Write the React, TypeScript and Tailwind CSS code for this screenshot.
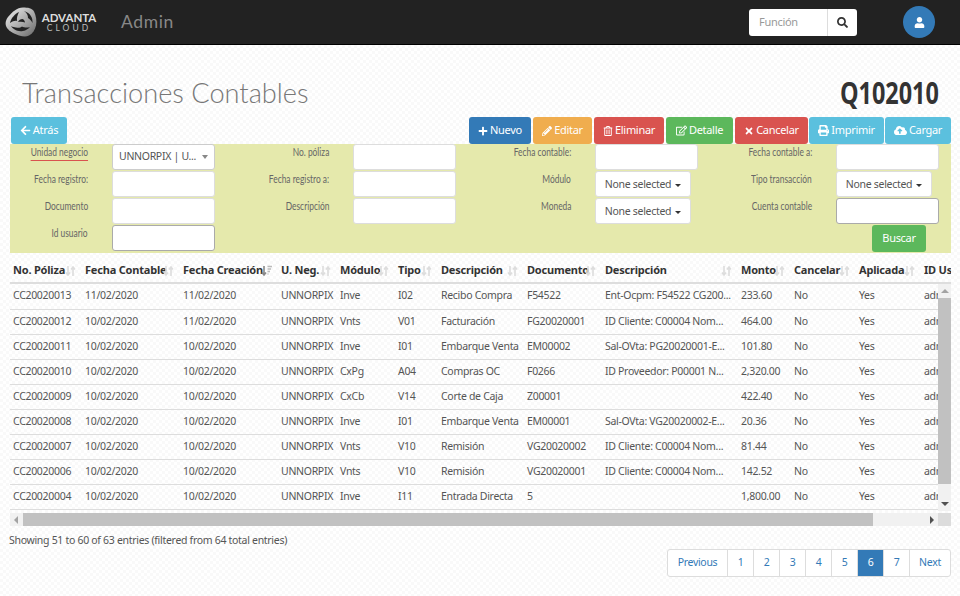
import { FaArrowLeft, FaPlus, FaPencilAlt, FaRegTrashAlt, FaRegEdit, FaTimes, FaPrint, FaCloudUploadAlt, FaSearch, FaUser } from 'react-icons/fa';
import type { ReactNode } from 'react';

const cols = [72, 98, 98, 59, 58, 43, 86, 78, 136, 53, 65, 65, 30];

const headers = ['No. Póliza', 'Fecha Contable', 'Fecha Creación', 'U. Neg.', 'Módulo', 'Tipo', 'Descripción', 'Documento', 'Descripción', 'Monto', 'Cancelar', 'Aplicada', 'ID Usuario'];

const rows = [
  ['CC20020013', '11/02/2020', '11/02/2020', 'UNNORPIX', 'Inve', 'I02', 'Recibo Compra', 'F54522', 'Ent-Ocpm: F54522 CG200...', '233.60'],
  ['CC20020012', '10/02/2020', '11/02/2020', 'UNNORPIX', 'Vnts', 'V01', 'Facturación', 'FG20020001', 'ID Cliente: C00004 Nom...', '464.00'],
  ['CC20020011', '10/02/2020', '10/02/2020', 'UNNORPIX', 'Inve', 'I01', 'Embarque Venta', 'EM00002', 'Sal-OVta: PG20020001-E...', '101.80'],
  ['CC20020010', '10/02/2020', '10/02/2020', 'UNNORPIX', 'CxPg', 'A04', 'Compras OC', 'F0266', 'ID Proveedor: P00001 N...', '2,320.00'],
  ['CC20020009', '10/02/2020', '10/02/2020', 'UNNORPIX', 'CxCb', 'V14', 'Corte de Caja', 'Z00001', '', '422.40'],
  ['CC20020008', '10/02/2020', '10/02/2020', 'UNNORPIX', 'Inve', 'I01', 'Embarque Venta', 'EM00001', 'Sal-OVta: VG20020002-E...', '20.36'],
  ['CC20020007', '10/02/2020', '10/02/2020', 'UNNORPIX', 'Vnts', 'V10', 'Remisión', 'VG20020002', 'ID Cliente: C00004 Nom...', '81.44'],
  ['CC20020006', '10/02/2020', '10/02/2020', 'UNNORPIX', 'Vnts', 'V10', 'Remisión', 'VG20020001', 'ID Cliente: C00004 Nom...', '142.52'],
  ['CC20020004', '10/02/2020', '10/02/2020', 'UNNORPIX', 'Inve', 'I11', 'Entrada Directa', '5', '', '1,800.00'],
];

function Btn({ color, icon, children, className = '' }: { color: string; icon: ReactNode; children: ReactNode; className?: string }) {
  return (
    <button className={`flex h-[27px] items-center justify-center gap-[2px] rounded-[3px] text-[11px] text-white ${color} ${className}`}>
      {icon}
      {children}
    </button>
  );
}

function Label({ children, underline }: { children: ReactNode; underline?: boolean }) {
  return (
    <div className="flex w-[78px] items-start justify-end">
      <span className={`origin-right scale-x-[0.7] whitespace-nowrap font-['Lato',sans-serif] text-[12px] leading-[16px] tracking-normal text-[#666] ${underline ? 'border-b border-[#d9534f]' : ''}`}>
        {children}
      </span>
    </div>
  );
}

function TextBox({ strong }: { strong?: boolean }) {
  return <div className={`h-[26px] w-[103px] rounded-[3px] border bg-white ${strong ? 'border-[#aaa]' : 'border-[#ddd]'}`} />;
}

function NoneSelected() {
  return (
    <div className="flex h-[26px] w-[96px] items-center justify-center gap-[4px] rounded-[3px] border border-[#ddd] bg-white pt-[2px] text-[#555]">
      None selected
      <span className="mt-[1px] h-0 w-0 border-x-[3.5px] border-t-[3.5px] border-x-transparent border-t-[#333]" />
    </div>
  );
}

function Field({ label, underline, children }: { label: string; underline?: boolean; children: ReactNode }) {
  return (
    <div className="flex h-[27px] gap-[24px]">
      <Label underline={underline}>{label}</Label>
      {children}
    </div>
  );
}

function SortIcon({ active }: { active?: boolean }) {
  return (
    <svg width="11" height="12" viewBox="0 0 11 12" className="absolute right-[6px] top-[7px]">
      <path d="M3 1v9M1 7.5 3 10l2-2.5" fill="none" stroke={active ? '#888' : '#ddd'} strokeWidth="1.6" />
      {active ? (
        <path d="M6.5 1.5h4.5M6.5 4h3.5M6.5 6.5h2.5M6.5 9h1" fill="none" stroke="#bbb" strokeWidth="1.4" />
      ) : (
        <path d="M8 11V2M6 4.5 8 2l2 2.5" fill="none" stroke="#ddd" strokeWidth="1.6" />
      )}
    </svg>
  );
}

function Logo() {
  return (
    <svg width="32" height="30" viewBox="0 0 32 30">
      <defs>
        <linearGradient id="logoGrad" x1="0" y1="0" x2="1" y2="1">
          <stop offset="0" stopColor="#f2f2f2" />
          <stop offset="0.55" stopColor="#a8a8a8" />
          <stop offset="1" stopColor="#666" />
        </linearGradient>
      </defs>
      <path d="M18 .5c5 0 9 .6 11 4 2 4 3 9 2 14-1 4-3 8-7 10-3 1.500-6 1-10 0C9 27 4 24 2 21 0 18 0 14 3 10 7 5 12 .5 18 .5Z" fill="url(#logoGrad)" />
      <path d="M14 5C10 7 6 11 5 16c3-2 5-2.500 7-2-.5-3 .5-6 2-9Z" fill="#222" />
      <path d="M19 4c3 2 4 4 4 7 2 1 3.500 3 4.500 5 .5-5-2-10-8.500-12Z" fill="#222" />
      <path d="M6 19c2 3 6 6 12 5 3-.5 5-2 7-4-3 1-6 .5-8-.5-1.500 1.500-4 1.500-6 1-2-.2-3-.5-5-1.500Z" fill="#222" />
      <path d="M13 15c1-2 2.500-3 4.500-3 1.500.5 2.500 2 2.500 3.500-2-.8-4.500-.8-7-.5Z" fill="#222" />
    </svg>
  );
}

function Page({ children, active, className = 'w-[26px]' }: { children: ReactNode; active?: boolean; className?: string }) {
  return (
    <div className={`flex h-[26px] items-center justify-center border-l border-[#ddd] first:border-l-0 ${active ? 'bg-[#337ab7] text-white' : 'text-[#337ab7]'} ${className}`}>
      {children}
    </div>
  );
}

export default function App() {
  return (
    <div className="h-[596px] w-[960px] overflow-hidden bg-[repeating-conic-gradient(#f9f9f9_0%_25%,#ffffff_0%_50%)] bg-[length:6px_6px] font-['Noto_Sans',sans-serif] text-[10.5px] tracking-[-0.3px] text-[#555]">
      {/* Top bar */}
      <header className="flex h-[45px] items-center border-b border-black bg-[#222] pl-[5px]">
        <Logo />
        <div className="ml-[5px] flex w-[54px] flex-col items-center font-['Lato',sans-serif] leading-none tracking-normal text-[#ddd]">
          <span className="text-[11.5px] font-bold">ADVANTA</span>
          <span className="text-[8.5px] tracking-[3px] text-[#bbb]">CLOUD</span>
        </div>
        <span className="ml-[25px] font-['Lato',sans-serif] text-[17.5px] tracking-[0.6px] text-[#888]">Admin</span>
        <div className="ml-auto mr-[46px] flex h-[27px] w-[108px] rounded-[3px] bg-white">
          <span className="flex flex-1 items-center pl-[10px] text-[11px] text-[#999]">Función</span>
          <span className="flex w-[30px] items-center justify-center border-l border-[#ddd] text-[#333]">
            <FaSearch size={11} />
          </span>
        </div>
        <div className="mr-[25px] flex h-[32px] w-[32px] items-center justify-center rounded-full bg-[#337ab7] text-white">
          <FaUser size={11} />
        </div>
      </header>

      {/* Title */}
      <div className="flex h-[72px] items-end justify-between pb-[5px] pl-[22px] pr-[21px]">
        <h1 className="font-['Lato',sans-serif] text-[27.2px] font-light leading-[38px] tracking-normal text-[#777]">Transacciones Contables</h1>
        <span className="origin-right scale-x-[0.78] font-['Open_Sans',sans-serif] text-[30px] font-bold leading-[38px] tracking-normal text-[#333]">Q102010</span>
      </div>

      {/* Toolbar */}
      <div className="flex pl-[11px] pr-[9px]">
        <Btn color="bg-[#5bc0de]" icon={<FaArrowLeft size={11} />} className="w-[56px]">Atrás</Btn>
        <div className="ml-auto flex gap-[2px]">
          <Btn color="bg-[#337ab7]" icon={<FaPlus size={10} />} className="w-[62px]">Nuevo</Btn>
          <Btn color="bg-[#f0ad4e]" icon={<FaPencilAlt size={10} />} className="w-[59px]">Editar</Btn>
          <Btn color="bg-[#d9534f]" icon={<FaRegTrashAlt size={10} />} className="w-[70px]">Eliminar</Btn>
          <Btn color="bg-[#5cb85c]" icon={<FaRegEdit size={11} />} className="w-[67px]">Detalle</Btn>
          <Btn color="bg-[#d9534f]" icon={<FaTimes size={10} />} className="mr-[-1px] w-[73px]">Cancelar</Btn>
          <Btn color="bg-[#5bc0de]" icon={<FaPrint size={11} />} className="mr-[-1px] w-[75px]">Imprimir</Btn>
          <Btn color="bg-[#5bc0de]" icon={<FaCloudUploadAlt size={13} />} className="w-[66px]">Cargar</Btn>
        </div>
      </div>

      {/* Filters */}
      <div className="ml-[10px] mr-[9px] grid h-[109px] grid-cols-[241px_242px_241px_auto] bg-[#e5e9ac]">
        <div>
          <Field label="Unidad negocio" underline>
            <div className="flex h-[26px] w-[103px] items-center justify-between whitespace-nowrap rounded-[3px] border border-[#ccc] bg-white px-[6px] text-[#555]">
              UNNORPIX | U...
              <span className="h-0 w-0 border-x-[3.5px] border-t-[4px] border-x-transparent border-t-[#888]" />
            </div>
          </Field>
          <Field label="Fecha registro:"><TextBox /></Field>
          <Field label="Documento"><TextBox /></Field>
          <Field label="Id usuario"><TextBox strong /></Field>
        </div>
        <div>
          <Field label="No. póliza"><TextBox /></Field>
          <Field label="Fecha registro a:"><TextBox /></Field>
          <Field label="Descripción"><TextBox /></Field>
        </div>
        <div>
          <Field label="Fecha contable:"><TextBox /></Field>
          <Field label="Módulo"><NoneSelected /></Field>
          <Field label="Moneda"><NoneSelected /></Field>
        </div>
        <div>
          <Field label="Fecha contable a:"><TextBox /></Field>
          <Field label="Tipo transacción"><NoneSelected /></Field>
          <Field label="Cuenta contable"><TextBox strong /></Field>
          <div className="flex justify-end pr-[25px]">
            <button className="h-[27px] w-[54px] rounded-[3px] bg-[#5cb85c] text-[11px] text-white">Buscar</button>
          </div>
        </div>
      </div>

      {/* Table */}
      <div className="ml-[10px] mr-[9px] mt-[5px]">
        <div className="overflow-hidden">
          <table className="table-fixed border-collapse" style={{ width: cols.reduce((a, b) => a + b, 0) }}>
            <colgroup>{cols.map((w, i) => <col key={i} style={{ width: w }} />)}</colgroup>
            <thead>
              <tr className="h-[25px] border-b-2 border-[#ddd]">
                {headers.map((h, i) => (
                  <th key={i} className="relative overflow-hidden whitespace-nowrap pl-[3px] pt-[1px] text-left text-[11px] font-bold tracking-[-0.2px] text-[#333]">
                    {h}
                    {i < 12 && <SortIcon active={i === 2} />}
                  </th>
                ))}
              </tr>
            </thead>
          </table>
        </div>
        <div className="flex h-[227px]">
          <div className="w-[928px] overflow-hidden">
            <table className="table-fixed border-collapse" style={{ width: cols.reduce((a, b) => a + b, 0) }}>
              <colgroup>{cols.map((w, i) => <col key={i} style={{ width: w }} />)}</colgroup>
              <tbody>
                {rows.map((r) => (
                  <tr key={r[0]} className="h-[25px] border-b border-[#ddd]">
                    {r.map((c, i) => (
                      <td key={i} className="overflow-hidden whitespace-nowrap pl-[3px]">{c}</td>
                    ))}
                    <td className="pl-[3px]">No</td>
                    <td className="pl-[3px]">Yes</td>
                    <td className="pl-[3px]">admin</td>
                    <td />
                  </tr>
                ))}
              </tbody>
            </table>
          </div>
          <div className="flex w-[13px] flex-col items-center bg-[#f1f1f1]">
            <span className="mb-[5px] mt-[5px] h-0 w-0 border-x-[4px] border-b-[4px] border-x-transparent border-b-[#a3a3a3]" />
            <div className="h-[186px] w-full bg-[#c1c1c1]" />
            <span className="mt-auto mb-[5px] h-0 w-0 border-x-[4px] border-t-[4px] border-x-transparent border-t-[#505050]" />
          </div>
        </div>
        <div className="mt-[2px] flex h-[13px]">
          <div className="flex w-[928px] items-center bg-[#f1f1f1]">
            <span className="ml-[4px] mr-[5px] h-0 w-0 border-y-[4px] border-r-[4px] border-y-transparent border-r-[#a3a3a3]" />
            <div className="h-full w-[850px] bg-[#c1c1c1]" />
            <span className="ml-auto mr-[4px] h-0 w-0 border-y-[4px] border-l-[4px] border-y-transparent border-l-[#505050]" />
          </div>
          <div className="w-[13px] bg-[#dcdcdc]" />
        </div>
      </div>

      {/* Footer */}
      <div className="ml-[9px] mt-[7px] leading-[15px] text-[#555]">Showing 51 to 60 of 63 entries (filtered from 64 total entries)</div>
      <div className="mr-[9px] mt-[1px] flex justify-end">
        <div className="flex overflow-hidden rounded-[3px] border border-[#ddd] bg-white">
          <Page className="w-[59px]">Previous</Page>
          <Page>1</Page>
          <Page>2</Page>
          <Page>3</Page>
          <Page>4</Page>
          <Page>5</Page>
          <Page active>6</Page>
          <Page>7</Page>
          <Page className="w-[41px]">Next</Page>
        </div>
      </div>
    </div>
  );
}
